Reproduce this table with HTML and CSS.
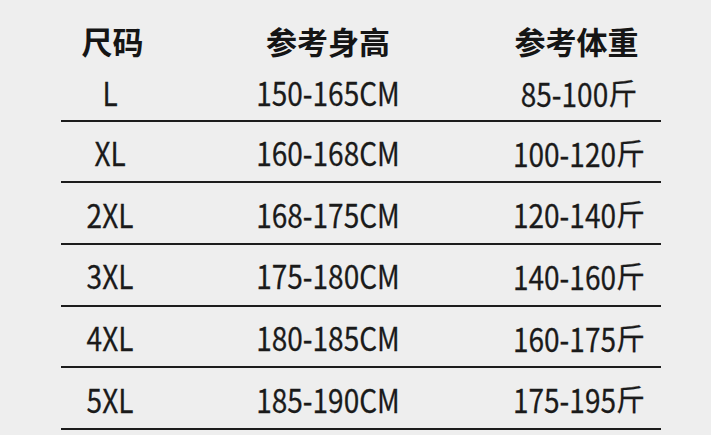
FILE: index.html
```html
<!DOCTYPE html>
<html lang="zh">
<head>
<meta charset="utf-8">
<link rel="stylesheet" href="styles.css">
</head>
<body>
<div class="chart">
  <div class="row head">
    <div>尺码</div>
    <div>参考身高</div>
    <div>参考体重</div>
  </div>
  <div class="row first">
    <div><span class="n">L</span></div>
    <div><span class="n">150-165CM</span></div>
    <div><span class="n">85-100</span><span class="u">斤</span></div>
  </div>
  <div class="row">
    <div><span class="n">XL</span></div>
    <div><span class="n">160-168CM</span></div>
    <div><span class="n">100-120</span><span class="u">斤</span></div>
  </div>
  <div class="row">
    <div><span class="n">2XL</span></div>
    <div><span class="n">168-175CM</span></div>
    <div><span class="n">120-140</span><span class="u">斤</span></div>
  </div>
  <div class="row">
    <div><span class="n">3XL</span></div>
    <div><span class="n">175-180CM</span></div>
    <div><span class="n">140-160</span><span class="u">斤</span></div>
  </div>
  <div class="row">
    <div><span class="n">4XL</span></div>
    <div><span class="n">180-185CM</span></div>
    <div><span class="n">160-175</span><span class="u">斤</span></div>
  </div>
  <div class="row">
    <div><span class="n">5XL</span></div>
    <div><span class="n">185-190CM</span></div>
    <div><span class="n">175-195</span><span class="u">斤</span></div>
  </div>
</div>
</body>
</html>
```
FILE: styles.css
```css
html, body {
  margin: 0;
  padding: 0;
  background: #eeeeee;
}
body {
  width: 711px;
  height: 435px;
  overflow: hidden;
  font-family: "Noto Sans CJK SC", "Noto Sans", sans-serif;
  color: #1a1a1a;
}
.chart {
  margin-left: 61px;
  width: 600px;
}
.row {
  display: grid;
  grid-template-columns: 98px 338px 164px;
  align-items: center;
  box-sizing: border-box;
  height: 61.7px;
  padding-top: 1px;
  border-bottom: 2px solid #1c1c1c;
  font-size: 28px;
  line-height: 1;
  -webkit-text-stroke: 0.25px #1a1a1a;
}
.row > div {
  text-align: center;
  white-space: nowrap;
}
.head {
  grid-template-columns: 103px 328px 169px;
  height: 65px;
  padding-top: 15px;
  border-bottom: none;
  font-size: 31px;
  font-weight: 700;
  color: #151515;
  -webkit-text-stroke: 0;
}
.first {
  height: 56.7px;
  padding-top: 0;
}
.n {
  display: inline-block;
  transform: scaleY(1.14);
}
.u {
  display: inline-block;
  font-size: 29px;
}
```
